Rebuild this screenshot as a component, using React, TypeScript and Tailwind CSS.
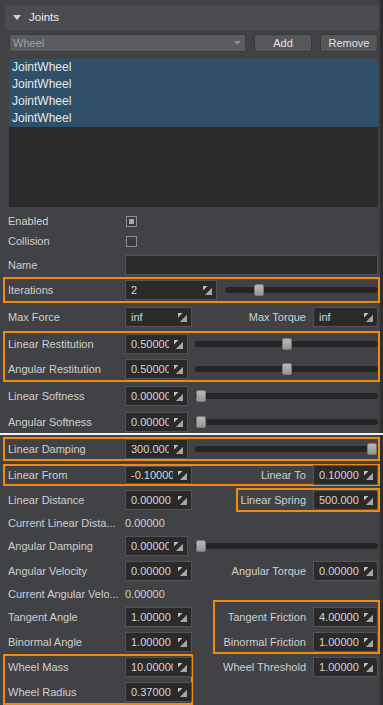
import React from 'react';

const ORANGE = 'border-[#f08a10]';

function FieldIcon() {
  return (
    <svg width="9" height="9" viewBox="0 0 9 9" className="shrink-0">
      <path d="M0 0H4.5L0 4.5Z" fill="#c2c2c2" />
      <path d="M9 9H1.8L9 1.8Z" fill="#a4a4a4" />
    </svg>
  );
}

function Field({ value, className, h = 'h-[20px]' }: { value: string; className: string; h?: string }) {
  return (
    <div
      className={`${className} ${h} shrink-0 flex items-center bg-[#2a2a2b] border border-[#525356] pl-[5px] pr-[4px]`}
    >
      <span className="flex-1 overflow-hidden whitespace-nowrap text-[#d6d6d6] mr-[5px]">{value}</span>
      <FieldIcon />
    </div>
  );
}

function Slider({ pct, className }: { pct: number; className: string }) {
  return (
    <div className={`${className} flex-1 relative h-[6px] rounded-full bg-[#252526]`}>
      <div
        className="absolute top-[-3px] w-[10px] h-[12px] rounded-[2px] bg-gradient-to-b from-[#b8b8b8] to-[#969696] border border-[#7a7a7a]"
        style={{ left: `calc(${pct} * (100% - 12px) + 1px)` }}
      />
    </div>
  );
}

function Label({ text }: { text: string }) {
  return <div className="w-[120px] shrink-0 pl-[3px] text-[#cfcfcf] whitespace-nowrap">{text}</div>;
}

function SliderRow({ label, value, pct, wide = false }: { label: string; value: string; pct: number; wide?: boolean }) {
  return (
    <div className="flex items-center h-[20px]">
      <Label text={label} />
      <Field value={value} className={wide ? 'w-[92px] h-full' : 'w-[63px]'} />
      <Slider pct={pct} className={wide ? 'ml-[8px]' : 'ml-[7px]'} />
    </div>
  );
}

function RightPair({ label, value }: { label: string; value: string }) {
  return (
    <div className="flex items-center gap-[7px]">
      <span className="text-[#cfcfcf] whitespace-nowrap">{label}</span>
      <Field value={value} className="w-[65px]" />
    </div>
  );
}

function PairRow({
  label,
  value,
  rLabel,
  rValue,
  boxRight = false,
  h = 'h-[20px]',
}: {
  label: string;
  value: string;
  rLabel: string;
  rValue: string;
  boxRight?: boolean;
  h?: string;
}) {
  return (
    <div className={`flex items-center ${h}`}>
      <Label text={label} />
      <Field value={value} className="w-[67px]" h={h} />
      <div className="flex-1" />
      {boxRight ? (
        <div className={`-my-[2px] -mr-[2px] border-2 ${ORANGE} pl-[3px]`}>
          <RightPair label={rLabel} value={rValue} />
        </div>
      ) : (
        <RightPair label={rLabel} value={rValue} />
      )}
    </div>
  );
}

function LeftRow({ label, value }: { label: string; value: string }) {
  return (
    <div className="flex items-center h-[20px]">
      <Label text={label} />
      <Field value={value} className="w-[67px]" />
    </div>
  );
}

function TextRow({ label, value }: { label: string; value: string }) {
  return (
    <div className="flex items-center h-[14px]">
      <Label text={label} />
      <span className="text-[#cfcfcf]">{value}</span>
    </div>
  );
}

function Checkbox({ checked }: { checked: boolean }) {
  return (
    <div className="w-[11px] h-[11px] ml-[1px] border border-[#8e8e8e] bg-[#3a3a3b] flex items-center justify-center">
      {checked && <div className="w-[5px] h-[5px] bg-[#a9a9a9]" />}
    </div>
  );
}

export default function App() {
  return (
    <div className="w-[383px] h-[705px] overflow-hidden flex bg-[#2f2f30] text-[11px] font-['Liberation_Sans',Arial,sans-serif]">
      <div className="w-[380px] shrink-0 bg-[#414245] pt-[5px] pl-[5px] pr-[2px] flex flex-col">
        {/* Header */}
        <div className="h-[25px] -mr-px shrink-0 rounded-[3px] bg-[#4b4c4f] flex items-center pl-[8px]">
          <svg width="8" height="5" viewBox="0 0 8 5" className="mr-[8px]">
            <path d="M0 0H8L4 5Z" fill="#d4d4d4" />
          </svg>
          <span className="text-[11.5px] text-[#ececec]">Joints</span>
        </div>

        {/* Type + buttons */}
        <div className="mt-[4px] h-[18px] shrink-0 flex pl-[4px] gap-[8px]">
          <div className="w-[237px] flex items-center justify-between bg-[#5b5c5f] border border-[#3b3c3e] rounded-[2px] pl-[3px] pr-[4px]">
            <span className="text-[#a3a3a3]">Wheel</span>
            <svg width="7" height="4" viewBox="0 0 7 4">
              <path d="M0 0H7L3.5 4Z" fill="#8d8d8d" />
            </svg>
          </div>
          <button className="w-[58px] bg-[#56575a] border border-[#37383a] rounded-[3px] text-[#e2e2e2]">Add</button>
          <button className="w-[58px] bg-[#56575a] border border-[#37383a] rounded-[3px] text-[#e2e2e2]">Remove</button>
        </div>

        {/* Joint list */}
        <div className="mt-[7px] ml-[4px] h-[148px] shrink-0 bg-[#2b2b2c]">
          {[0, 1, 2, 3].map((i) => (
            <div key={i} className="h-[17px] leading-[17px] bg-[#2f5068] pl-[3px] text-[12px] text-[#e8e8e8]">
              JointWheel
            </div>
          ))}
        </div>

        <div className="mt-[5px] h-[19px] shrink-0 flex items-center">
          <Label text="Enabled" />
          <Checkbox checked />
        </div>
        <div className="mt-[1px] h-[19px] shrink-0 flex items-center">
          <Label text="Collision" />
          <Checkbox checked={false} />
        </div>
        <div className="mt-[4px] h-[20px] shrink-0 flex items-center">
          <Label text="Name" />
          <div className="flex-1 h-full bg-[#2a2a2b] border border-[#525356]" />
        </div>

        <div className={`mt-[2px] -mx-[2px] shrink-0 border-2 ${ORANGE} py-[1px]`}>
          <SliderRow label="Iterations" value="2" pct={0.2} wide />
        </div>

        <div className="mt-[4px] shrink-0">
          <PairRow label="Max Force" value="inf" rLabel="Max Torque" rValue="inf" />
        </div>

        <div className={`mt-[4px] -mx-[2px] shrink-0 border-2 ${ORANGE} py-[1px] flex flex-col gap-[5px]`}>
          <SliderRow label="Linear Restitution" value="0.50000" pct={0.5} />
          <SliderRow label="Angular Restitution" value="0.50000" pct={0.5} />
        </div>

        <div className="mt-[4px] shrink-0">
          <SliderRow label="Linear Softness" value="0.00000" pct={0} />
        </div>
        <div className="mt-[6px] shrink-0">
          <SliderRow label="Angular Softness" value="0.00000" pct={0} />
        </div>

        <div className="mt-[1px] -ml-[5px] w-[383px] h-[2px] shrink-0 bg-[#f4f4f4]" />

        <div className={`mt-[2px] -mx-[2px] shrink-0 border-2 ${ORANGE}`}>
          <SliderRow label="Linear Damping" value="300.00000" pct={1} />
        </div>

        <div className={`mt-[3px] -mx-[2px] shrink-0 border-2 ${ORANGE}`}>
          <PairRow label="Linear From" value="-0.10000" rLabel="Linear To" rValue="0.10000" h="h-[18px]" />
        </div>

        <div className="mt-[4px] shrink-0">
          <PairRow label="Linear Distance" value="0.00000" rLabel="Linear Spring" rValue="500.000" boxRight />
        </div>

        <div className="mt-[6px] shrink-0">
          <TextRow label="Current Linear Dista..." value="0.00000" />
        </div>

        <div className="mt-[6px] shrink-0">
          <SliderRow label="Angular Damping" value="0.00000" pct={0} />
        </div>

        <div className="mt-[5px] shrink-0">
          <PairRow label="Angular Velocity" value="0.00000" rLabel="Angular Torque" rValue="0.00000" />
        </div>

        <div className="mt-[6px] shrink-0">
          <TextRow label="Current Angular Velo..." value="0.00000" />
        </div>

        {/* Friction / wheel block */}
        <div className="flex shrink-0">
          <div className="w-[188px] pt-[6px] flex flex-col gap-[5px]">
            <LeftRow label="Tangent Angle" value="1.00000" />
            <LeftRow label="Binormal Angle" value="1.00000" />
            <div className={`-ml-[2px] mt-[-3px] border-2 ${ORANGE} py-[1px] flex flex-col gap-[5px]`}>
              <LeftRow label="Wheel Mass" value="10.00000" />
              <LeftRow label="Wheel Radius" value="0.37000" />
            </div>
          </div>
          <div className="flex-1 flex flex-col items-end">
            <div className={`-mt-[1px] -mr-[2px] border-2 ${ORANGE} pt-[5px] pl-[8px] flex flex-col gap-[5px] items-end`}>
              <div className="h-[20px] flex items-center">
                <RightPair label="Tangent Friction" value="4.00000" />
              </div>
              <div className="h-[20px] flex items-center">
                <RightPair label="Binormal Friction" value="1.00000" />
              </div>
            </div>
            <div className="mt-[3px] h-[20px] flex items-center">
              <RightPair label="Wheel Threshold" value="1.00000" />
            </div>
          </div>
        </div>
      </div>
      <div className="w-[3px] shrink-0" />
    </div>
  );
}
